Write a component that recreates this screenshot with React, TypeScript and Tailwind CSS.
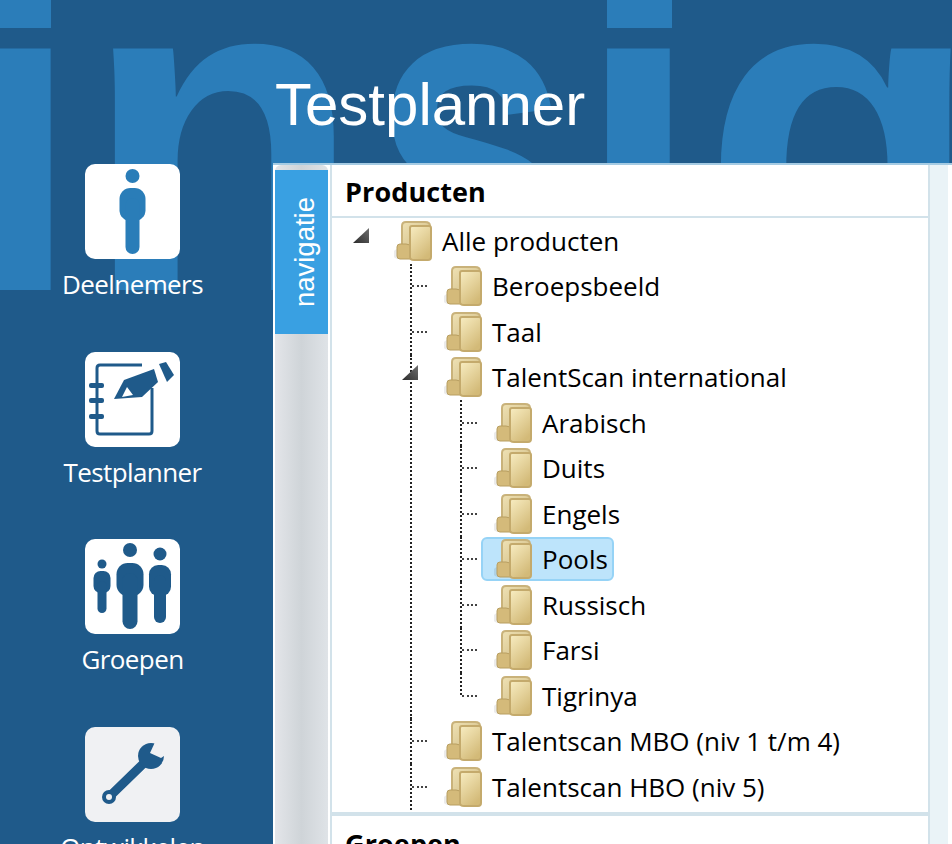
import React from "react";

const sans = "font-['Open_Sans',sans-serif]";

function Folder() {
	return (
		<svg width="38" height="40" viewBox="0 0 38 40" className="shrink-0">
			<defs>
				<linearGradient id="fBack" x1="0" y1="0" x2="1" y2="1">
					<stop offset="0" stopColor="#efe2b5" />
					<stop offset="1" stopColor="#cdb77e" />
				</linearGradient>
				<linearGradient id="fFront" x1="0" y1="0" x2="0.6" y2="1">
					<stop offset="0" stopColor="#f8edc2" />
					<stop offset="1" stopColor="#d3ba78" />
				</linearGradient>
			</defs>
			<ellipse cx="4" cy="33" rx="5" ry="5" fill="#000" opacity="0.08" />
			<path d="M8 5 Q8 1 12 1 L31 1 Q36 1 36 5 L36 30 L8 30 Z" fill="url(#fBack)" stroke="#c9b27a" strokeWidth="2" />
			<path d="M3 26 Q3 23 6 23 L12 23 L20 25 L20 38 L6 38 Q3 38 3 35 Z" fill="#d4ba7a" stroke="#b89e60" strokeWidth="1" />
			<path d="M16 7 Q16 5 18 5 L35 5 Q37 5 37 7 L37 36 Q37 39 34 39 L20 39 Q16 39 16 36 Z" fill="url(#fFront)" stroke="#c4aa6c" strokeWidth="2" />
		</svg>
	);
}

function Triangle() {
	return (
		<svg width="17" height="17" viewBox="0 0 17 17" className="mb-[10px] shrink-0">
			<defs>
				<linearGradient id="tri" x1="0" y1="1" x2="1" y2="0">
					<stop offset="0" stopColor="#2c2c2c" />
					<stop offset="1" stopColor="#6e6e6e" />
				</linearGradient>
			</defs>
			<polygon points="17,1 17,16 1,16" fill="url(#tri)" />
		</svg>
	);
}

function Label({ text, selected }: { text: string; selected?: boolean }) {
	return (
		<div
			className={`ml-[4px] flex h-[44px] items-center gap-[10px] rounded-[6px] border-2 pl-[11px] pr-[4px] ${
				selected ? "border-[#96d3f6] bg-[#bde4fb]" : "border-transparent"
			}`}
		>
			<Folder />
			<span className="whitespace-nowrap text-[26px] leading-none text-black">{text}</span>
		</div>
	);
}

function Leaf({
	text,
	selected,
	last,
	open,
	children,
}: {
	text: string;
	selected?: boolean;
	last?: boolean;
	open?: boolean;
	children?: React.ReactNode;
}) {
	return (
		<li className="flex">
			<span
				className={`w-0 border-l-2 border-dotted border-[#222] ${last ? "h-[22px]" : "self-stretch"}`}
			/>
			<div>
				<div className="flex h-[45.5px] items-center">
					{open ? (
						<div className="-ml-[11px] mr-[9px] w-[17px]">
							<Triangle />
						</div>
					) : (
						<span className="w-[15px] border-t-2 border-dotted border-[#444]" />
					)}
					<Label text={text} selected={selected} />
				</div>
				{children}
			</div>
		</li>
	);
}

function Person({
	cx,
	headY,
	headR,
	bodyW,
	bodyTop,
	bodyBottom,
	legW,
	footY,
	fill,
}: {
	cx: number;
	headY: number;
	headR: number;
	bodyW: number;
	bodyTop: number;
	bodyBottom: number;
	legW: number;
	footY: number;
	fill: string;
}) {
	return (
		<g fill={fill}>
			<circle cx={cx} cy={headY} r={headR} />
			<rect x={cx - bodyW / 2} y={bodyTop} width={bodyW} height={bodyBottom - bodyTop} rx={bodyW / 2.4} />
			<rect x={cx - legW / 2} y={bodyTop + 10} width={legW} height={footY - bodyTop - 10} rx={legW / 2} />
		</g>
	);
}

function DeelnemersIcon() {
	return (
		<svg viewBox="0 0 95 95" className="h-full w-full">
			<Person cx={47.5} headY={12} headR={7} bodyW={26} bodyTop={24} bodyBottom={57} legW={14} footY={90} fill="#2a7db8" />
		</svg>
	);
}

function PlannerIcon() {
	return (
		<svg viewBox="0 0 95 95" className="h-full w-full">
			<path d="M57 13 L15 13 Q12 13 12 16 L12 79 Q12 82 15 82 L64 82 Q67 82 67 79 L67 36" fill="none" stroke="#1f5a8a" strokeWidth="3" />
			<g fill="#1f5a8a">
				<rect x="4" y="31" width="15" height="5" rx="2" />
				<rect x="4" y="46" width="15" height="5" rx="2" />
				<rect x="4" y="62" width="15" height="5" rx="2" />
				<rect x="11" y="40" width="2" height="2" />
				<rect x="11" y="55" width="2" height="2" />
				<polygon points="29,47 39,28 69,17 73,30 57,45" />
				<polygon points="74,12 81,10 89,23 82,30" />
			</g>
			<polygon points="42,35 37,45 48,43" fill="#fff" />
		</svg>
	);
}

function GroepenIcon() {
	return (
		<svg viewBox="0 0 95 95" className="h-full w-full">
			<Person cx={17} headY={25} headR={4.5} bodyW={17} bodyTop={32} bodyBottom={54} legW={9} footY={74} fill="#1f5a8a" />
			<Person cx={45} headY={11} headR={7} bodyW={27} bodyTop={24} bodyBottom={57} legW={15} footY={90} fill="#1f5a8a" />
			<Person cx={75} headY={15} headR={6.5} bodyW={22} bodyTop={26} bodyBottom={57} legW={12} footY={84} fill="#1f5a8a" />
		</svg>
	);
}

function WrenchIcon() {
	return (
		<svg viewBox="0 0 95 95" className="h-full w-full">
			<line x1="24" y1="70" x2="60" y2="35" stroke="#1f5a8a" strokeWidth="9" strokeLinecap="round" />
			<circle cx="24" cy="70" r="7" fill="#1f5a8a" />
			<circle cx="66" cy="29" r="13" fill="#1f5a8a" />
			<polygon points="65,26 71,13 87,13 85,25 76,31" fill="#f0f1f3" />
			<circle cx="24" cy="70" r="3" fill="#f0f1f3" />
		</svg>
	);
}

function NavItem({ label, light, children }: { label: string; light?: boolean; children: React.ReactNode }) {
	return (
		<div className="flex h-[187.5px] flex-col items-center">
			<div className={`h-[95px] w-[95px] overflow-hidden rounded-[10px] ${light ? "bg-[#f0f1f3]" : "bg-white"}`}>
				{children}
			</div>
			<span className="mt-[7px] text-[26px] leading-[36px] tracking-[-0.6px] text-white">{label}</span>
		</div>
	);
}

export default function App() {
	return (
		<div className={`relative h-[844px] w-[952px] overflow-hidden bg-[#1f5a8a] ${sans}`}>
			{/* watermark word in the header, the two rects lengthen the dots of the i's */}
			<div className="absolute left-[-44px] top-[-168px] whitespace-nowrap font-['Liberation_Sans',sans-serif] text-[457px] font-bold leading-[600px] text-[#2b7db9]">
				in
				<span className="ml-[10px] inline-block w-[203px] origin-left scale-x-[0.78]">s</span>
				ight
			</div>
			<div className="absolute left-0 top-0 h-[28px] w-[51px] bg-[#2b7db9]" />
			<div className="absolute left-[607px] top-0 h-[28px] w-[65px] bg-[#2b7db9]" />

			<header className="relative flex h-[163px] items-end pb-[22px] pl-[275px]">
				<h1 className="font-['Liberation_Sans',sans-serif] text-[60px] leading-[72px] text-white">
					Testplanner
				</h1>
			</header>

			<div className="relative flex">
				<aside className="w-[273px] pr-[8px] pt-px">
					<NavItem label="Deelnemers">
						<DeelnemersIcon />
					</NavItem>
					<NavItem label="Testplanner">
						<PlannerIcon />
					</NavItem>
					<NavItem label="Groepen">
						<GroepenIcon />
					</NavItem>
					<NavItem label="Ontwikkelen" light>
						<WrenchIcon />
					</NavItem>
				</aside>

				<div className="flex h-[681px] flex-1 border-t-2 border-[#a5cbe3] bg-white pl-[2px] pr-[4px]">
					{/* vertical tabs */}
					<div className="h-full w-[53px] rounded-t-[6px] bg-linear-to-r from-[#e3e5e9] via-[#cfd4d8] to-[#dfe3e7] pt-[5px]">
						<div className="flex h-[164px] items-center justify-center bg-[#39a0e2] pl-[6px]">
							<span className="rotate-180 font-['Liberation_Sans',sans-serif] text-[27.5px] leading-none text-white [writing-mode:vertical-rl]">
								navigatie
							</span>
						</div>
					</div>

					<div className="ml-[2px] flex flex-1 border-x-2 border-[#d2e2ea]">
						<div className="flex min-w-0 flex-1 flex-col">
							<section className="h-[651px] shrink-0 overflow-hidden border-b-4 border-[#d2e2ea]">
								<h2 className="flex h-[53px] items-center border-b-2 border-[#d2e2ea] pl-[13px] pt-[3px] text-[27px] font-bold tracking-[0.1px] text-black">
									Producten
								</h2>
								<div className="flex h-[45.5px] items-center pl-[20px]">
									<Triangle />
									<div className="ml-[8px]">
										<Label text="Alle producten" />
									</div>
								</div>
								<ul className="ml-[78px]">
									<Leaf text="Beroepsbeeld" />
									<Leaf text="Taal" />
									<Leaf text="TalentScan international" open>
										<ul className="ml-[48px]">
											<Leaf text="Arabisch" />
											<Leaf text="Duits" />
											<Leaf text="Engels" />
											<Leaf text="Pools" selected />
											<Leaf text="Russisch" />
											<Leaf text="Farsi" />
											<Leaf text="Tigrinya" last />
										</ul>
									</Leaf>
									<Leaf text="Talentscan MBO (niv 1 t/m 4)" />
									<Leaf text="Talentscan HBO (niv 5)" />
								</ul>
							</section>
							<h2 className="flex h-[53px] shrink-0 items-center pl-[13px] pt-[3px] text-[27px] font-bold tracking-[0.1px] text-black">
								Groepen
							</h2>
						</div>
					</div>

					<div className="w-[18px] bg-[#eaf3f7]" />
				</div>
			</div>
		</div>
	);
}
